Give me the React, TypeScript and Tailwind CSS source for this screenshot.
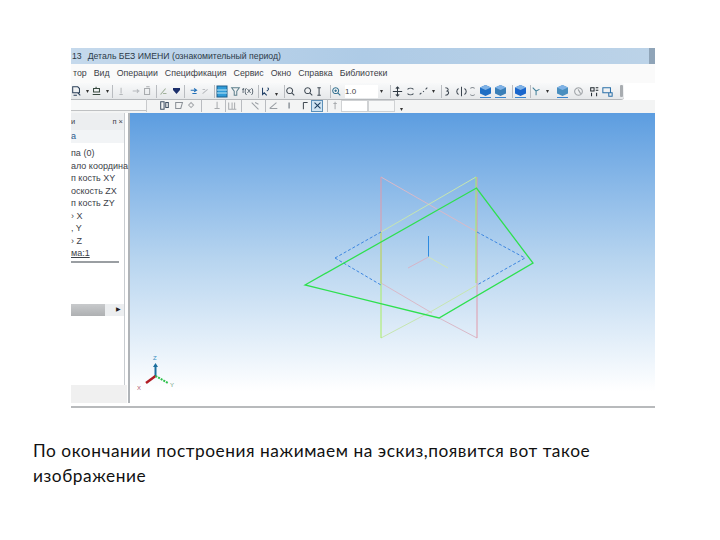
import React from "react";

const menu = ["тор", "Вид", "Операции", "Спецификация", "Сервис", "Окно", "Справка", "Библиотеки"];
const tree = [
  "па (0)",
  "ало координа",
  "п кость XY",
  "оскость ZX",
  "п кость ZY",
  "› X",
  ", Y",
  "› Z",
];

type P = { className?: string };

const Sep = ({ className = "" }: P) => <span className={`w-px h-[13px] bg-[#b9bcc0] shrink-0 ${className}`} />;

const Arrow = ({ className = "" }: P) => (
  <svg width="3" height="3" viewBox="0 0 3 3" className={`shrink-0 ${className}`}>
    <path d="M0 0h3L1.500 3z" fill="#333" />
  </svg>
);

const Cube = ({ color = "#1f6fc4", className = "" }: P & { color?: string }) => (
  <svg width="13" height="14" viewBox="0 0 13 14" className={`shrink-0 ${className}`}>
    <path d="M6.500 1 12 3.500v6L6.500 12 1 9.500v-6z" fill={color} />
    <path d="M1 3.500 6.500 6 12 3.500 6.500 1z" fill="#7fb2e6" />
    <path d="M1 13.500h11" stroke="#3a86d0" strokeWidth="1" />
  </svg>
);

const Glyph = ({ d, stroke = "#55606c", className = "" }: P & { d: string; stroke?: string }) => (
  <svg width="11" height="11" viewBox="0 0 13 13" fill="none" stroke={stroke} strokeWidth="1.200" className={`shrink-0 ${className}`}>
    <path d={d} />
  </svg>
);

const Toolbar1 = () => (
  <div className="h-[17px] w-[553px] flex items-center bg-gradient-to-b from-[#f8f9fa] to-[#e6e8ea] border-b border-[#b5b8bb] rounded-r-[3px]">
    <Glyph d="M2 1h6l2 2v5H2zM8 8l3 3M3 11h4" stroke="#2a3f58" />
    <Arrow className="ml-[4px]" />
    <Glyph d="M3 3h7v4H3zM2 10h9M6 1v2" stroke="#36483e" className="ml-[2px]" />
    <Arrow className="ml-[4px]" />
    <Sep className="ml-[3px]" />
    <Glyph d="M6 2v7M4 10h4" stroke="#b5b8bb" className="ml-[3px]" />
    <Glyph d="M2 6h8M7 4l2 2-2 2" stroke="#b5b8bb" className="ml-[4px]" />
    <Glyph d="M3 3h6v7H3zM5 1h4" stroke="#a8abae" />
    <Sep className="ml-[3px]" />
    <Glyph d="M3 10 9 3M6 9h4" stroke="#a0b09a" className="ml-[1px]" />
    <svg width="11" height="11" viewBox="0 0 11 11" className="shrink-0 ml-[2px]"><path d="M2 2h7v2L5.500 8 2 4z" fill="#1c2f6b" /></svg>
    <Sep className="ml-[2px]" />
    <Glyph d="M2 5h6M6 3l3 2-3 2M4 9h5" stroke="#2270b8" className="ml-[4px]" />
    <Glyph d="M3 9 9 4M3 4h3" stroke="#b9bcc0" />
    <Sep className="ml-[3px]" />
    <svg width="12" height="13" viewBox="0 0 12 13" className="shrink-0 ml-[1px]"><rect x="1" y="1" width="10" height="11" fill="#2f9bd8" stroke="#1c5f8c" /><path d="M1 5h10M1 8h10" stroke="#bfe8f5" /></svg>
    <Glyph d="M2 2h9L8 6v5H5V6z" stroke="#5d7f8c" className="ml-[2px]" />
    <span className="w-[12px] ml-[1px] text-[8px] leading-none text-[#33424f] shrink-0 whitespace-nowrap">f(x)</span>
    <Sep className="ml-[4px]" />
    <Glyph d="M3 2v8l2-2 3 3M9 2c2 1 1 3-1 4" stroke="#1f3f66" className="ml-[1px]" />
    <Arrow className="ml-[4px] mt-[6px]" />
    <Sep className="ml-[6px]" />
    <Glyph d="M5.500 2a3.500 3.500 0 1 0 .01 0M8 8l3 3" stroke="#3c4650" />
    <Glyph d="M5.500 2a3.500 3.500 0 1 0 .01 0M8 8l3 3" stroke="#3c4650" className="ml-[7px]" />
    <Glyph d="M6 2v9M4 2h4M4 11h4" stroke="#3c4650" />
    <Sep className="ml-[5px]" />
    <Glyph d="M5.500 2a3.500 3.500 0 1 0 .01 0M8 8l3 3M5.500 4v3M4 5.500h3" stroke="#2f6f8f" />
    <span className="ml-[3px] w-[33px] h-[13px] bg-white shrink-0 text-[8px] leading-[13px] text-[#444]">1.0</span>
    <Arrow className="ml-[2px]" />
    <Sep className="ml-[7px]" />
    <Glyph d="M6.500 1v11M1 6.500h11M4.500 3l2-2 2 2M4.500 10l2 2 2-2" stroke="#2f3943" className="ml-[1px]" />
    <Glyph d="M3 4a5 5 0 0 1 7 0M10 9a5 5 0 0 1-7 0" stroke="#3c4650" className="ml-[2px]" />
    <Glyph d="M2 10l2-2M6 7l1-1M9 4l2-2" stroke="#3c4650" className="ml-[2px]" />
    <Arrow className="ml-[3px]" />
    <Sep className="ml-[6px]" />
    <Glyph d="M4 2c4 0 4 3 2 4 3 1 2 5-2 5" stroke="#3c4650" />
    <Glyph d="M6.500 1v11M3 3a4 4 0 0 0 0 7M10 3a4 4 0 0 1 0 7" stroke="#3c4650" className="ml-[3px]" />
    <Glyph d="M4 3a3 3 0 0 1 5 0M4 10a3 3 0 0 0 5 0" stroke="#8a9096" />
    <Cube className="ml-[1px]" />
    <Cube color="#3a7fb8" className="ml-[2px]" />
    <Sep className="ml-[5px]" />
    <Cube color="#1a66cc" className="ml-[1px]" />
    <Sep className="ml-[3px]" />
    <Glyph d="M2 2l4 4v5M6 6l4-2" stroke="#3f7f9a" />
    <Arrow className="ml-[4px]" />
    <Cube color="#4a8fbf" className="ml-[7px]" />
    <Glyph d="M6.500 2a4.500 4.500 0 1 0 .01 0M6 4l3 5" stroke="#9ca0a4" className="ml-[4px]" />
    <Glyph d="M2 2h4v4H2zM8 2h3M8 5h3M3 8v4M9 8v4" stroke="#20282f" className="ml-[5px]" />
    <Glyph d="M1 2h9v6H1zM8 8h4v4H8z" stroke="#2a6fa8" className="ml-[2px]" />
    <span className="ml-[7px] w-[3px] h-[12px] bg-[#a8acb0] shrink-0 rounded-[1px]" />
  </div>
);

const Toolbar2 = () => (
  <div className="h-[13px] pb-[2px] flex items-center bg-[#f3f4f4]">
    <span className="w-[75px] h-[11px] bg-[#f7f8f8] border-b border-[#bfc1c3] shrink-0" />
    <Sep className="bg-[#c8cacc]" />
    <Glyph d="M2 2h4v9H2zM8 3h3v6H8z" stroke="#3f5064" className="ml-[12px]" />
    <Glyph d="M2 3h8l-2 7H2z" stroke="#8a9096" className="ml-[4px]" />
    <Glyph d="M3 6l3-3 3 3-3 3z" stroke="#a8abae" className="ml-[1px]" />
    <Sep className="ml-[4px]" />
    <Glyph d="M6 2v8M3 10h6" stroke="#a8abae" className="ml-[10px]" />
    <Sep className="ml-[2px]" />
    <Glyph d="M2 3v8h9M6 3v8M9 3v8" stroke="#a8abae" className="ml-[1px]" />
    <Sep className="ml-[3px]" />
    <Glyph d="M2 3l8 8M6 3l4 2" stroke="#9a9fa4" className="ml-[8px]" />
    <Sep className="ml-[4px]" />
    <Glyph d="M2 10l8-7M2 10h9" stroke="#9a9fa4" className="ml-[2px]" />
    <Glyph d="M6 3v7" stroke="#5d6770" className="ml-[5px]" />
    <Glyph d="M4 3h5M4 3v8" stroke="#3f4850" className="ml-[5px]" />
    <span className="w-[12px] h-[12px] bg-[#cfe4f3] border border-[#5d90b8] shrink-0 flex items-center justify-center">
      <Glyph d="M3 3l7 7M10 3l-7 7" stroke="#1c3f60" />
    </span>
    <Sep className="ml-[4px]" />
    <Glyph d="M6 2v9M4 4h4" stroke="#a8abae" className="ml-[2px]" />
    <span className="w-[27px] h-[12px] bg-white border border-[#d0d2d4] shrink-0" />
    <span className="w-[27px] h-[12px] bg-[#f7f8f8] border border-[#d0d2d4] shrink-0" />
    <Arrow className="ml-[5px] mt-[8px]" />
  </div>
);

const Model = () => (
  <svg viewBox="130 113 525 290" className="absolute inset-0 w-full h-full" fill="none">
    {/* plane ZX */}
    <path d="M381 177 477 232M381 283 432 313M439 318 477 338" stroke="#d9b9c8" />
    <path d="M381 177V283M477 177V338" stroke="#e09aaa" />
    {/* plane ZY */}
    <path d="M476 177 381 232M381 338 432 311M432 311 477 285" stroke="#c6e6b0" />
    <path d="M381 232V338M476 177V283" stroke="#a8ee60" />
    {/* plane XY */}
    <path d="M335 258 381 232M477 232 525 258 477 285M335 258 381 285" stroke="#3d86e0" strokeDasharray="3 2" />
    {/* sketch */}
    <path d="M305 285 476.500 188 533 263 439 318z" stroke="#2ee04f" strokeWidth="1.300" />
    {/* axes */}
    <path d="M428.500 236V257" stroke="#2c8ae0" />
    <path d="M428.500 257 408 268" stroke="#d6b4c8" />
    <path d="M428.500 257 448 268" stroke="#cfe6b8" />
    {/* triad */}
    <path d="M155.500 376V365" stroke="#1b6f9f" strokeWidth="2" />
    <path d="M153 367 155.500 363 158 367z" fill="#1b6f9f" />
    <path d="M155.500 376 146 383" stroke="#b01c24" strokeWidth="2.500" />
    <path d="M155.500 376 168 383" stroke="#2cc04a" strokeWidth="2" strokeDasharray="2 1" />
    <text x="153" y="360" fontSize="6" fill="#3a8fc0" fontFamily="Liberation Sans">Z</text>
    <text x="137" y="390" fontSize="6" fill="#b06070" fontFamily="Liberation Sans">X</text>
    <text x="170" y="387" fontSize="6" fill="#70a080" fontFamily="Liberation Sans">Y</text>
  </svg>
);

export default function App() {
  return (
    <div className="w-[720px] h-[540px] bg-white overflow-hidden font-['Lato','Noto_Sans',sans-serif]">
      <div className="pt-[48px] pl-[71px]">
        <div className="w-[584px] h-[360px] flex flex-col font-['Liberation_Sans',sans-serif] text-[#3c4148] blur-[0.35px]">
          <div className="h-[16px] shrink-0 flex items-center bg-gradient-to-r from-[#c5d9ec] via-[#aecbe6] to-[#bcd3e8] text-[8.700px] leading-none text-[#2c3a48] pl-[1px] relative">
            <span>13</span>
            <span className="ml-[6px]">Деталь БЕЗ ИМЕНИ (ознакомительный период)</span>
            <span className="absolute right-0 top-0 h-full w-[6px] bg-[#8fa4b8]" />
          </div>
          <div className="h-[19px] shrink-0 flex items-center gap-[7px] bg-[#fafafa] text-[8.800px] leading-none pl-[2px]">
            {menu.map((m) => (
              <span key={m}>{m}</span>
            ))}
          </div>
          <Toolbar1 />
          <Toolbar2 />
          <div className="flex-1 flex min-h-0">
            <div className="w-[59px] shrink-0 flex bg-white border-r-[2px] border-[#b0b4b8]">
              <div className="w-[54px] shrink-0 flex flex-col border-r border-[#c8ccd0]">
                <div className="h-[17px] shrink-0 flex items-center justify-between bg-[#eceef0] text-[7.500px] leading-none pr-[1px]">
                  <span>и</span>
                  <span>п ×</span>
                </div>
                <div className="h-[13px] shrink-0 bg-[#f2f4f6] text-[9px] leading-none text-[#2a5a8c] flex items-center">а</div>
                <div className="flex flex-col pt-[4px] text-[9px] leading-[12.500px] whitespace-nowrap">
                  {tree.map((t) => (
                    <span key={t}>{t}</span>
                  ))}
                  <span className="underline">ма:1</span>
                </div>
                <div className="h-[2px] w-[48px] bg-[#9a9ea2] mt-[1px] shrink-0" />
                <div className="h-[12px] mt-[41px] shrink-0 flex bg-[#eceef0] items-center">
                  <div className="w-[34px] h-full bg-gradient-to-b from-[#c8cacc] to-[#aeb0b2]" />
                  <span className="text-[6px] ml-[11px] text-[#222]">▶</span>
                </div>
                <div className="flex-1" />
                <div className="h-[18px] shrink-0 bg-[#f0f0f0] w-[56px]" />
              </div>
            </div>
            <div className="flex-1 relative bg-gradient-to-b from-[#5c9de0] via-[#b6d4ef] to-white to-[96%]">
              <Model />
            </div>
          </div>
          <div className="h-[5px] shrink-0 bg-white border-b-[2px] border-[#b8babc]" />
        </div>
      </div>
      <p className="ml-[33px] mt-[30px] w-[600px] text-[17.300px] tracking-[0.55px] leading-[25px] text-[#111]">
        По окончании построения нажимаем на эскиз,появится вот такое изображение
      </p>
    </div>
  );
}
